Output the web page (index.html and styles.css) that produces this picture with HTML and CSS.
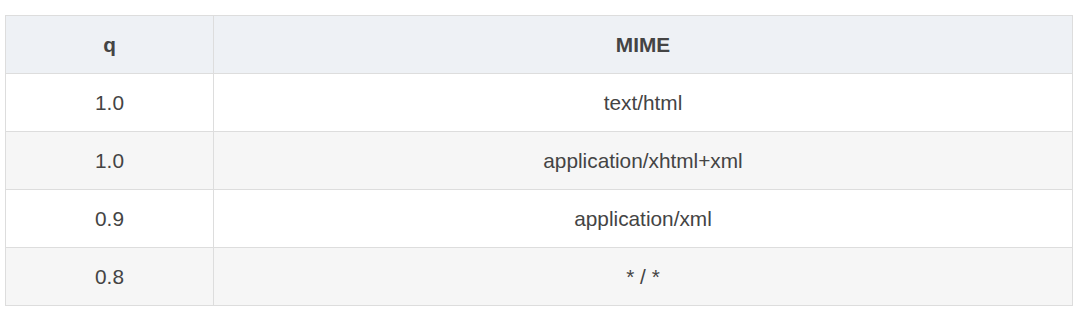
FILE: index.html
```html
<!DOCTYPE html>
<html lang="en">
<head>
    <meta charset="UTF-8">
    <meta name="viewport" content="width=device-width, initial-scale=1.0">
    <title>Accept header q values</title>
    <link rel="stylesheet" href="styles.css">
</head>
<body>

<div class="table-wrap">
    <table class="mime-table">
        <thead>
            <tr>
                <th class="col-q">q</th>
                <th>MIME</th>
            </tr>
        </thead>
        <tbody>
            <tr>
                <td>1.0</td>
                <td>text/html</td>
            </tr>
            <tr>
                <td>1.0</td>
                <td>application/xhtml+xml</td>
            </tr>
            <tr>
                <td>0.9</td>
                <td>application/xml</td>
            </tr>
            <tr>
                <td>0.8</td>
                <td>* / *</td>
            </tr>
        </tbody>
    </table>
</div>

</body>
</html>
```

FILE: styles.css
```css
body {
    font-family: "Liberation Sans", Arial, sans-serif;
    background-color: #fff;
    color: #444;
    margin: 0;
}

.table-wrap {
    padding: 15px 5px;
}

.mime-table {
    width: 100%;
    border-collapse: collapse;
    font-size: 20.8px;
}

.mime-table th,
.mime-table td {
    border: 1px solid #ddd;
    text-align: center;
    padding: 16px 8px;
    line-height: 25px;
}

.mime-table th {
    background-color: #eef1f5;
    font-weight: bold;
    color: #444;
}

.col-q {
    width: 191px;
}

.mime-table tbody tr:nth-child(even) {
    background-color: #f6f6f6;
}
```
